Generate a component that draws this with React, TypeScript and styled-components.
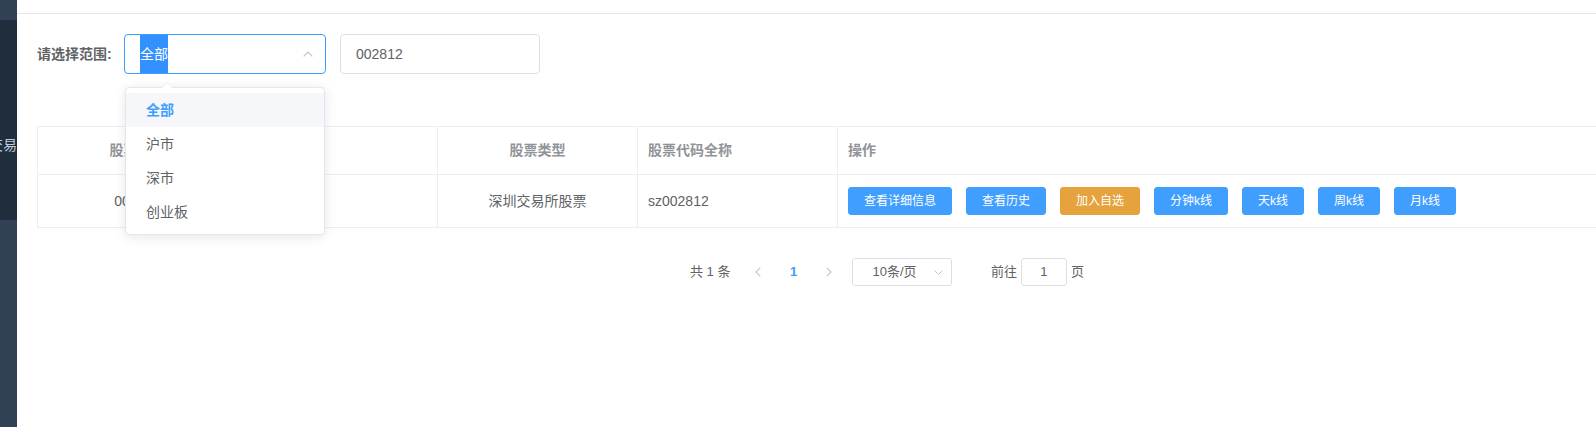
import React from 'react';
import styled, { createGlobalStyle } from 'styled-components';

const GlobalStyle = createGlobalStyle`
  html, body { margin: 0; padding: 0; overflow: hidden; background: #fff; }
  body { font-family: "Liberation Sans", "Noto Sans CJK SC", sans-serif; }
  * { box-sizing: border-box; }
`;

const Layout = styled.div`
  display: flex;
  width: 1596px;
  height: 427px;
  overflow: hidden;
`;

const Sidebar = styled.aside`
  width: 17px;
  flex-shrink: 0;
  background: #304156;
  display: flex;
  flex-direction: column;
  overflow: hidden;
`;

const SideTitle = styled.div`
  height: 20px;
`;

const SubMenu = styled.ul`
  margin: 0;
  padding: 0;
  list-style: none;
  background: #1f2d3d;
`;

const SubItem = styled.li`
  height: 50px;
  line-height: 50px;
  display: flex;
  justify-content: flex-end;
  white-space: nowrap;
  font-size: 14px;
  color: #bfcbd9;
`;

const Main = styled.main`
  flex: 1;
  min-width: 0;
  display: flex;
  flex-direction: column;
  overflow: hidden;
`;

const Navbar = styled.header`
  height: 14px;
  flex-shrink: 0;
  border-bottom: 1px solid #e6e6e6;
`;

const Content = styled.section`
  padding: 20px 0 0 20px;
`;

const FormRow = styled.div`
  display: flex;
  align-items: center;
  height: 40px;
`;

const Label = styled.label`
  width: 87px;
  font-size: 14px;
  font-weight: 700;
  color: #606266;
  line-height: 40px;
`;

const SelectBox = styled.div`
  position: relative;
  width: 202px;
  height: 40px;
`;

const SelectInner = styled.div`
  height: 40px;
  border: 1px solid #409eff;
  border-radius: 4px;
  display: flex;
  align-items: center;
  padding: 0 12px 0 15px;
  background: #fff;
`;

const Highlight = styled.span`
  height: 38px;
  line-height: 38px;
  font-size: 14px;
  color: #fff;
  background: #3390ff;
`;

const Suffix = styled.svg`
  margin-left: auto;
  flex-shrink: 0;
`;

const Dropdown = styled.ul`
  position: absolute;
  top: 53px;
  left: 1px;
  width: 200px;
  margin: 0;
  padding: 5px 0;
  list-style: none;
  background: #fff;
  border: 1px solid #e4e7ed;
  border-radius: 4px;
  box-shadow: 0 2px 12px 0 rgba(0, 0, 0, 0.1);
  z-index: 10;

  &::before,
  &::after {
    content: '';
    position: absolute;
    left: 35px;
    width: 0;
    height: 0;
    border: 6px solid transparent;
    border-top-width: 0;
  }
  &::before {
    top: -6px;
    border-bottom-color: #ebeef5;
  }
  &::after {
    top: -5px;
    border-bottom-color: #fff;
  }
`;

const Option = styled.li<{ $active?: boolean }>`
  height: 34px;
  line-height: 34px;
  padding: 0 20px;
  font-size: 14px;
  color: ${(p) => (p.$active ? '#409eff' : '#606266')};
  font-weight: ${(p) => (p.$active ? 700 : 400)};
  background: ${(p) => (p.$active ? '#f5f7fa' : '#fff')};
`;

const TextInput = styled.div`
  margin-left: 14px;
  width: 200px;
  height: 40px;
  line-height: 38px;
  border: 1px solid #dcdfe6;
  border-radius: 4px;
  padding: 0 15px;
  font-size: 14px;
  color: #606266;
`;

const Table = styled.div`
  margin-top: 52px;
  width: 1700px;
  display: grid;
  grid-template-columns: 200px 200px 200px 200px 1fr;
  border-top: 1px solid #ebeef5;
  border-left: 1px solid #ebeef5;
`;

const Cell = styled.div<{ $head?: boolean; $center?: boolean }>`
  display: flex;
  align-items: center;
  justify-content: ${(p) => (p.$center ? 'center' : 'flex-start')};
  padding: 12px 10px;
  min-height: ${(p) => (p.$head ? '48px' : '53px')};
  line-height: 23px;
  font-size: 14px;
  white-space: nowrap;
  overflow: hidden;
  color: ${(p) => (p.$head ? '#909399' : '#606266')};
  font-weight: ${(p) => (p.$head ? 700 : 400)};
  border-right: 1px solid #ebeef5;
  border-bottom: 1px solid #ebeef5;
`;

const Actions = styled.div`
  display: flex;
  gap: 14px;
`;

const Button = styled.button<{ $warning?: boolean }>`
  height: 28px;
  padding: 7px 15px;
  font-family: inherit;
  font-size: 12px;
  line-height: 12px;
  color: #fff;
  background: ${(p) => (p.$warning ? '#e6a23c' : '#409eff')};
  border: 1px solid ${(p) => (p.$warning ? '#e6a23c' : '#409eff')};
  border-radius: 3px;
  white-space: nowrap;
`;

const PagerBar = styled.div`
  width: 1700px;
  margin-top: 30px;
  display: flex;
  justify-content: center;
`;

const Pagination = styled.div`
  display: flex;
  align-items: center;
  padding: 0 5px;
  height: 28px;
  font-size: 13px;
  color: #303133;
  font-weight: 700;
`;

const Total = styled.span`
  min-width: 35.5px;
  margin-right: 10px;
  line-height: 28px;
  font-weight: 400;
  color: #606266;
`;

const NavBtn = styled.span`
  width: 35.5px;
  height: 28px;
  display: flex;
  align-items: center;
  justify-content: center;
`;

const PageNum = styled.span`
  width: 35.5px;
  height: 28px;
  line-height: 28px;
  text-align: center;
  color: #409eff;
`;

const Sizes = styled.div`
  margin: 0 15px 0 5px;
  width: 100px;
  height: 28px;
  border: 1px solid #dcdfe6;
  border-radius: 3px;
  display: flex;
  align-items: center;
  padding: 0 8px 0 8px;
  font-weight: 400;
  color: #606266;
`;

const SizesText = styled.span`
  flex: 1;
  text-align: center;
  padding-right: 6px;
  line-height: 26px;
`;

const Jumper = styled.span`
  margin-left: 24px;
  display: flex;
  align-items: center;
  font-weight: 400;
  color: #606266;
  line-height: 28px;
`;

const Editor = styled.span`
  margin: 0 4px;
  width: 46px;
  height: 28px;
  line-height: 26px;
  border: 1px solid #dcdfe6;
  border-radius: 3px;
  text-align: center;
`;

const ChevronUp = () => (
  <Suffix width="10" height="6" viewBox="0 0 10 6">
    <path d="M0.6 5.4 L5 1 L9.4 5.4" fill="none" stroke="#c0c4cc" strokeWidth="1.2" />
  </Suffix>
);

const ChevronDown = () => (
  <Suffix width="9" height="5" viewBox="0 0 9 5">
    <path d="M0.5 0.6 L4.5 4.4 L8.5 0.6" fill="none" stroke="#c0c4cc" strokeWidth="1" />
  </Suffix>
);

const ChevronSide = ({ dir }: { dir: 'left' | 'right' }) => (
  <svg width="6" height="10" viewBox="0 0 6 10">
    <path
      d={dir === 'left' ? 'M5.2 0.8 L1 5 L5.2 9.2' : 'M0.8 0.8 L5 5 L0.8 9.2'}
      fill="none"
      stroke="#c0c4cc"
      strokeWidth="1.2"
    />
  </svg>
);

const options = ['全部', '沪市', '深市', '创业板'];
const buttons = [
  { label: '查看详细信息' },
  { label: '查看历史' },
  { label: '加入自选', warning: true },
  { label: '分钟k线' },
  { label: '天k线' },
  { label: '周k线' },
  { label: '月k线' },
];

export default function App() {
  return (
    <>
      <GlobalStyle />
      <Layout>
        <Sidebar>
          <SideTitle />
          <SubMenu>
            <SubItem />
            <SubItem />
            <SubItem>深圳交易</SubItem>
            <SubItem />
          </SubMenu>
        </Sidebar>
        <Main>
          <Navbar />
          <Content>
            <FormRow>
              <Label>请选择范围:</Label>
              <SelectBox>
                <SelectInner>
                  <Highlight>全部</Highlight>
                  <ChevronUp />
                </SelectInner>
                <Dropdown>
                  {options.map((o, i) => (
                    <Option key={o} $active={i === 0}>
                      {o}
                    </Option>
                  ))}
                </Dropdown>
              </SelectBox>
              <TextInput>002812</TextInput>
            </FormRow>

            <Table>
              <Cell $head $center>股票代码</Cell>
              <Cell $head>股票名称</Cell>
              <Cell $head $center>股票类型</Cell>
              <Cell $head>股票代码全称</Cell>
              <Cell $head>操作</Cell>

              <Cell $center>002812</Cell>
              <Cell>恩捷股份</Cell>
              <Cell $center>深圳交易所股票</Cell>
              <Cell>sz002812</Cell>
              <Cell>
                <Actions>
                  {buttons.map((b) => (
                    <Button key={b.label} $warning={b.warning}>
                      {b.label}
                    </Button>
                  ))}
                </Actions>
              </Cell>
            </Table>

            <PagerBar>
              <Pagination>
                <Total>共 1 条</Total>
                <NavBtn>
                  <ChevronSide dir="left" />
                </NavBtn>
                <PageNum>1</PageNum>
                <NavBtn>
                  <ChevronSide dir="right" />
                </NavBtn>
                <Sizes>
                  <SizesText>10条/页</SizesText>
                  <ChevronDown />
                </Sizes>
                <Jumper>
                  前往
                  <Editor>1</Editor>
                  页
                </Jumper>
              </Pagination>
            </PagerBar>
          </Content>
        </Main>
      </Layout>
    </>
  );
}
